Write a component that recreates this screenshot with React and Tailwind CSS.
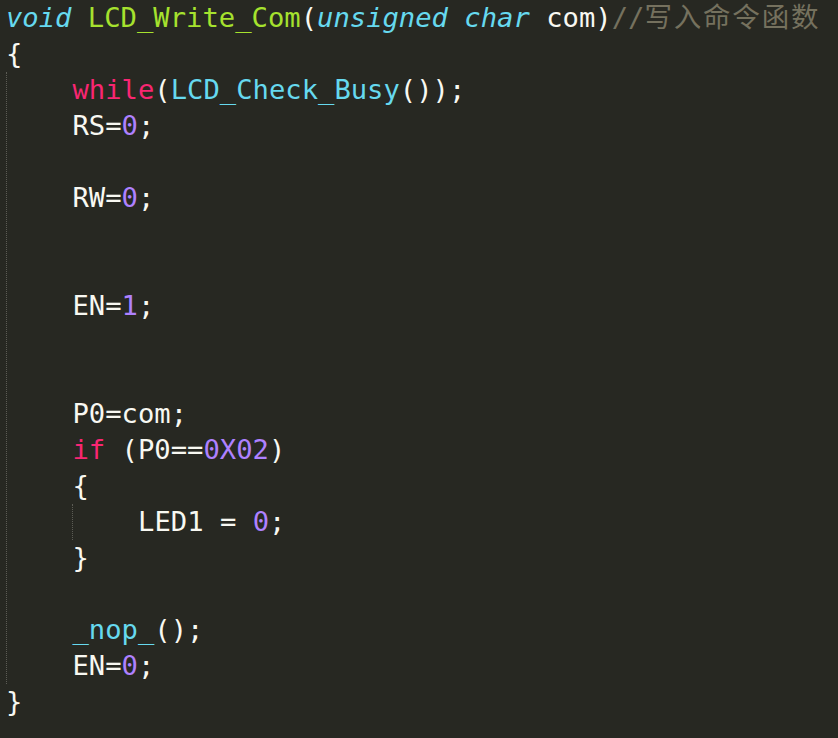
import React from 'react';

// Monokai palette
const kw = 'text-[#f92672]';
const fn = 'text-[#a6e22e]';
const ty = 'text-[#66d9ef] italic';
const call = 'text-[#66d9ef]';
const num = 'text-[#ae81ff]';
const cmt = 'text-[#75715e]';

const Line = ({ children }) => (
  <div className="h-[36px] leading-[36px] whitespace-pre">{children || ' '}</div>
);

const App = () => {
  return (
    <div
      className="w-[838px] h-[738px] overflow-hidden bg-[#272822] text-[#f8f8f2] text-[27.2px] pl-[6px]"
      style={{ fontFamily: '"DejaVu Sans Mono", "Liberation Mono", "Noto Sans CJK SC", monospace' }}
    >
      <Line>
        <span className={ty}>void</span> <span className={fn}>LCD_Write_Com</span>(
        <span className={ty}>unsigned</span> <span className={ty}>char</span> com)
        <span className={cmt}>//</span>
        <span
          className={`${cmt} text-[27.5px] leading-none tracking-[1.8px]`}
          style={{ fontFamily: '"Noto Sans CJK SC", sans-serif' }}
        >
          写入命令函数
        </span>
      </Line>
      <Line>{'{'}</Line>

      {/* body with indent guide */}
      <div className="border-l border-dotted border-[#5c5c55]">
        <Line>
          {'    '}
          <span className={kw}>while</span>(<span className={call}>LCD_Check_Busy</span>());
        </Line>
        <Line>
          {'    RS='}
          <span className={num}>0</span>;
        </Line>
        <Line />
        <Line>
          {'    RW='}
          <span className={num}>0</span>;
        </Line>
        <Line />
        <Line />
        <Line>
          {'    EN='}
          <span className={num}>1</span>;
        </Line>
        <Line />
        <Line />
        <Line>{'    P0=com;'}</Line>
        <Line>
          {'    '}
          <span className={kw}>if</span> (P0==<span className={num}>0X02</span>)
        </Line>
        <Line>{'    {'}</Line>
        <div className="flex">
          <div className="w-[64.6px] shrink-0" />
          <div className="border-l border-dotted border-[#5c5c55]">
            <Line>
              {'    LED1 = '}
              <span className={num}>0</span>;
            </Line>
          </div>
        </div>
        <Line>{'    }'}</Line>
        <Line />
        <Line>
          {'    '}
          <span className={call}>_nop_</span>();
        </Line>
        <Line>
          {'    EN='}
          <span className={num}>0</span>;
        </Line>
      </div>
      <Line>{'}'}</Line>
    </div>
  );
};

export default App;
